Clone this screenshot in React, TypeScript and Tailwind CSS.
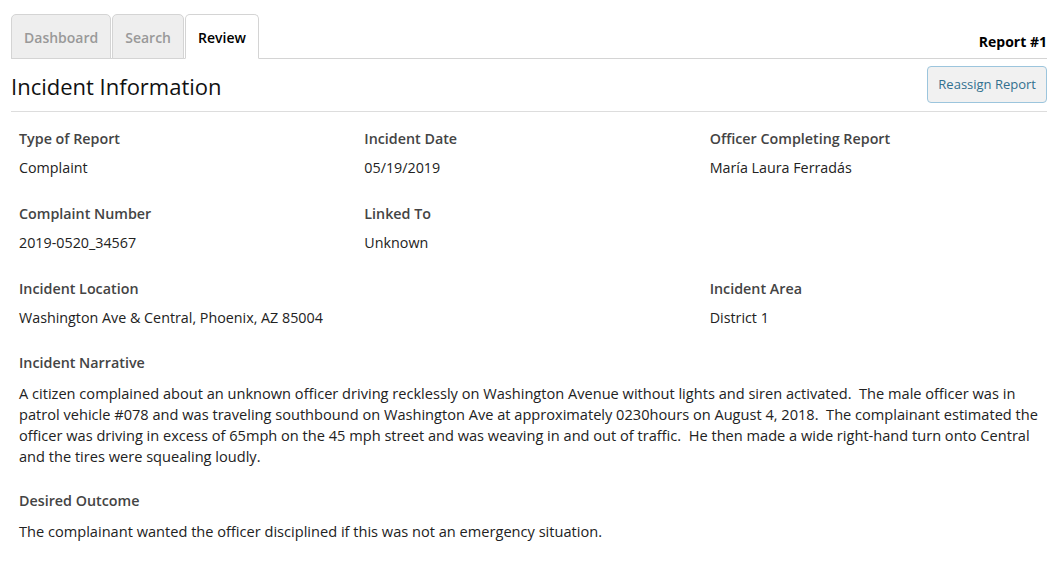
import React from "react";

type Field = {
  label: string;
  value: string;
  col?: string;
};

const rows: Field[][] = [
  [
    { label: "Type of Report", value: "Complaint" },
    { label: "Incident Date", value: "05/19/2019" },
    { label: "Officer Completing Report", value: "María Laura Ferradás" },
  ],
  [
    { label: "Complaint Number", value: "2019-0520_34567" },
    { label: "Linked To", value: "Unknown" },
  ],
];

const tabs = ["Dashboard", "Search", "Review"];

function FieldBlock({ label, value, col = "" }: Field) {
  return (
    <div className={`px-2 ${col}`}>
      <div className="text-[14.3px] leading-[20px] font-semibold text-[#444]">{label}</div>
      <div className="mt-[9px] text-[14.3px] leading-[20px] text-[#222]">{value}</div>
    </div>
  );
}

export default function App() {
  const active = "Review";

  return (
    <div
      className="min-h-[565px] bg-white px-[11px] pt-[14px]"
      style={{ fontFamily: '"Open Sans", "Noto Sans", sans-serif' }}
    >
      {/* tabs */}
      <div className="flex items-end justify-between border-b border-[#d4d4d4]">
        <div className="flex">
          {tabs.map((t) => {
            const isActive = t === active;
            return (
              <div
                key={t}
                className={[
                  "-mb-px ml-[1px] h-[45px] rounded-t-[5px] border border-[#d4d4d4] px-[12px] pt-[12px] text-[14px] font-semibold first:ml-0",
                  isActive
                    ? "border-b-white bg-white px-[11px] text-black"
                    : "bg-[#eeeeee] text-[#999]",
                ].join(" ")}
              >
                {t}
              </div>
            );
          })}
        </div>
        <div className="pb-[6px] text-[14px] font-bold text-black">Report #1</div>
      </div>

      {/* header */}
      <div className="flex items-center justify-between border-b border-[#dddddd] pt-[7px] pb-[8px]">
        <h1 className="pt-[3px] text-[22px] leading-[30px] text-[#111]">Incident Information</h1>
        <button
          type="button"
          className="h-[37px] rounded-[4px] border border-[#9cc5dd] bg-[#f1f1f1] px-[10px] text-[13px] text-[#31708f]"
        >
          Reassign Report
        </button>
      </div>

      {/* details */}
      <div className="pt-[17px]">
        {rows.map((row, i) => (
          <div key={i} className="mb-[26px] grid grid-cols-3">
            {row.map((f) => (
              <FieldBlock key={f.label} {...f} />
            ))}
          </div>
        ))}

        <div className="mb-[25px] grid grid-cols-3">
          <FieldBlock
            label="Incident Location"
            value="Washington Ave & Central, Phoenix, AZ 85004"
            col="col-span-2"
          />
          <FieldBlock label="Incident Area" value="District 1" />
        </div>

        <div className="mb-[24px] px-2">
          <div className="text-[14.3px] leading-[20px] font-semibold text-[#444]">Incident Narrative</div>
          <p className="mt-[10px] text-[14.6px] leading-[21px] text-[#222]">
            A citizen complained about an unknown officer driving recklessly on Washington Avenue
            without lights and siren activated.&nbsp; The male officer was in patrol vehicle #078
            and was traveling southbound on Washington Ave at approximately 0230hours on August 4,
            2018.&nbsp; The complainant estimated the officer was driving in excess of 65mph on the
            45 mph street and was weaving in and out of traffic.&nbsp; He then made a wide
            right-hand turn onto Central and the tires were squealing loudly.
          </p>
        </div>

        <div className="px-2">
          <div className="text-[14.3px] leading-[20px] font-semibold text-[#444]">Desired Outcome</div>
          <p className="mt-[10px] text-[14.6px] leading-[21px] text-[#222]">
            The complainant wanted the officer disciplined if this was not an emergency situation.
          </p>
        </div>
      </div>
    </div>
  );
}
